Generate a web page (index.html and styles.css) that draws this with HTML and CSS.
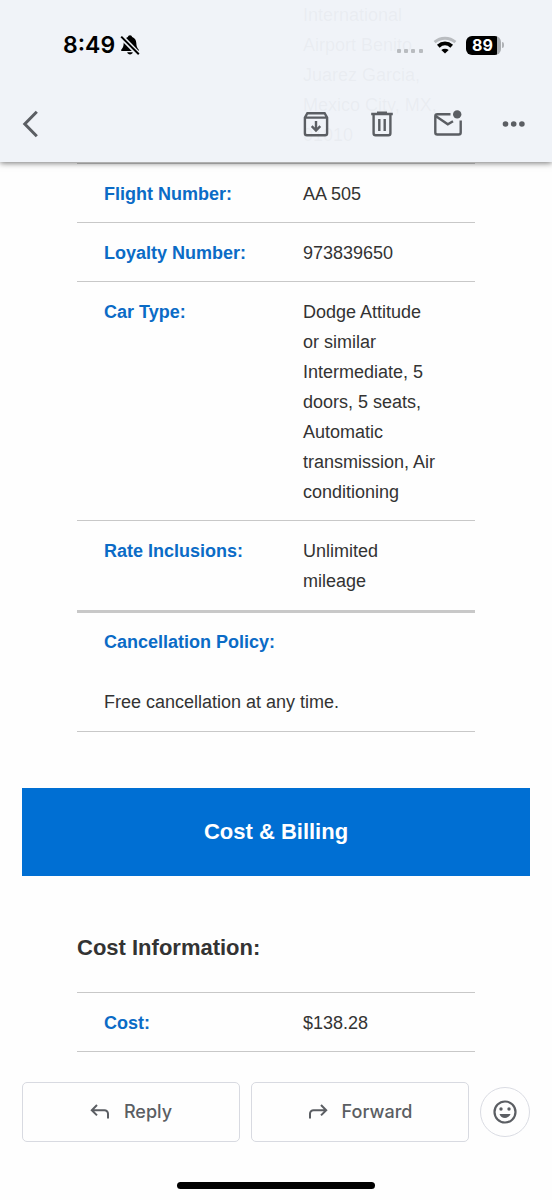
FILE: index.html
```html
<!DOCTYPE html>
<html lang="en">
<head>
<meta charset="utf-8">
<meta name="viewport" content="width=device-width, initial-scale=1">
<title>Cost &amp; Billing</title>
<link rel="stylesheet" href="styles.css">
</head>
<body>
<header class="top">
  <div class="status">
    <span class="time">8:49</span>
    <svg class="bell" width="20" height="22" viewBox="0 0 20 22" aria-hidden="true">
      <path d="M10 1.2c-1.200 0-2 .8-2.200 1.900C5.200 4 3.800 6.200 3.700 9c-.1 3.500-.9 4.900-2.300 6.400-.6.700-.2 1.600.7 1.600h15.800c.9 0 1.300-.9.7-1.600-1.400-1.500-2.200-2.900-2.300-6.400-.1-2.800-1.500-5-4.100-5.900C12 2 11.200 1.200 10 1.200z"/>
      <path d="M7.200 18.300h5.600c-.3 1.300-1.400 2.100-2.800 2.100s-2.500-.8-2.800-2.100z"/>
      <path class="bell-gap" d="M1.200 2.600 18.200 20"/>
      <path class="bell-slash" d="M1.200 2.600 18.800 20.200"/>
    </svg>
    <span class="status-right">
      <svg class="signal" width="28" height="6" viewBox="0 0 28 6" aria-hidden="true"><rect x="1" y="1" width="4" height="4" rx="1"/><rect x="8" y="1" width="4" height="4" rx="1"/><rect x="15" y="1" width="4" height="4" rx="1"/><rect x="23" y="1" width="4" height="4" rx="1"/></svg>
      <svg width="24" height="18" viewBox="0 0 24 18" aria-hidden="true">
        <path class="wifi-off" d="M1.600 6.200C7.600.9 16.400.9 22.400 6.200"/>
        <path class="wifi-on" d="M5.300 10.200c4-3.500 9.400-3.500 13.400 0"/>
        <path d="M12 17.600 8.300 14c2.200-1.800 5.200-1.800 7.400 0z"/>
      </svg>
      <span class="battery"><span class="level">89</span></span>
    </span>
  </div>
  <nav class="toolbar" aria-label="Message actions">
    <button class="tool back" type="button" aria-label="Back"><svg viewBox="0 0 44 44"><path d="M28.800 9.800 16.800 22l12 12.200" stroke-width="3"/></svg></button>
    <button class="tool" type="button" aria-label="Archive"><svg viewBox="0 0 44 44"><path d="M10.900 15.500 13.400 11.200H30.600L33.100 15.500V31.300a2 2 0 0 1-2 2H12.900a2 2 0 0 1-2-2zM10.900 15.600H33.100M22 19V28.500M17.700 24.200 22 28.500l4.300-4.300"/></svg></button>
    <button class="tool" type="button" aria-label="Delete"><svg viewBox="0 0 44 44"><path d="M11.200 12H32.800M17 10.600h10M13.600 12V31.300a2 2 0 0 0 2 2H28.400a2 2 0 0 0 2-2V12M19.300 17V29M24.700 17V29"/></svg></button>
    <button class="tool" type="button" aria-label="Mark as unread"><svg viewBox="0 0 44 44"><path d="M24.500 12.300H11.300a2 2 0 0 0-2 2V30.500a2 2 0 0 0 2 2H32.700a2 2 0 0 0 2-2V18.500M10 14.300 21.800 22.300 27 19.200"/><circle class="solid" cx="31.200" cy="12.400" r="4.200"/></svg></button>
    <button class="tool" type="button" aria-label="More options"><svg viewBox="0 0 44 44"><g class="solid"><circle cx="13.500" cy="22" r="2.800"/><circle cx="21.700" cy="22" r="2.800"/><circle cx="29.900" cy="22" r="2.800"/></g></svg></button>
  </nav>
</header>

<main class="mail">
  <table class="details">
    <tbody>
      <tr class="partial"><th scope="row"></th><td>International Airport Benito Juarez Garcia, Mexico City, MX, 01010</td></tr>
      <tr><th scope="row">Flight Number:</th><td>AA 505</td></tr>
      <tr><th scope="row">Loyalty Number:</th><td>973839650</td></tr>
      <tr><th scope="row">Car Type:</th><td>Dodge Attitude or similar Intermediate, 5 doors, 5 seats, Automatic transmission, Air conditioning</td></tr>
      <tr class="last"><th scope="row">Rate Inclusions:</th><td>Unlimited mileage</td></tr>
    </tbody>
  </table>
  <section class="policy">
    <h3>Cancellation Policy:</h3>
    <p>Free cancellation at any time.</p>
  </section>
  <h1 class="banner">Cost &amp; Billing</h1>
  <h2 class="subhead">Cost Information:</h2>
  <table class="details cost">
    <tbody><tr><th scope="row">Cost:</th><td>$138.28</td></tr></tbody>
  </table>
</main>

<footer class="bottom">
  <div class="actions">
    <button class="action" type="button"><svg width="20" height="16" viewBox="0 0 20 16" aria-hidden="true"><path d="M7 1 1.800 6.200 7 11.400M2 6.200H14.500a3.500 3.500 0 0 1 3.500 3.500V14.500"/></svg>Reply</button>
    <button class="action" type="button"><svg width="20" height="16" viewBox="0 0 20 16" aria-hidden="true"><path d="M13 1 18.200 6.200 13 11.400M18 6.200H5.500A3.500 3.500 0 0 0 2 9.700V14.500"/></svg>Forward</button>
    <button class="react" type="button" aria-label="Add reaction"><svg width="24" height="24" viewBox="0 0 24 24"><circle class="face" cx="12" cy="12" r="10.500"/><circle cx="8" cy="9" r="1.700"/><circle cx="16" cy="9" r="1.700"/><path d="M6.500 14h11c-.8 2.400-2.900 4-5.500 4s-4.700-1.600-5.500-4z"/></svg></button>
  </div>
  <div class="home"></div>
</footer>
</body>
</html>
```
FILE: styles.css
```css
* { box-sizing: border-box; }

body {
  margin: 0;
  min-height: 100vh;
  display: flex;
  flex-direction: column;
  position: relative;
  background: #fefefe;
  color: #333;
  font: 18px/30px "Liberation Sans", Arial, sans-serif;
}

button { padding: 0; background: none; font: inherit; color: inherit; }
h1, h2, h3, p { margin: 0; }

.top {
  position: absolute;
  top: 0;
  left: 0;
  right: 0;
  padding-bottom: 5px;
  background: rgba(239, 243, 248, 0.97);
  box-shadow: 0 1px 6px rgba(0, 0, 0, 0.55);
}

.status {
  display: flex;
  align-items: center;
  height: 90px;
  padding: 0 48px 0 63px;
  color: #000;
}

.time { font: 600 23px/28px Inter, sans-serif; }
.bell { margin-left: 5px; }
.bell-gap { stroke: #eff3f8; stroke-width: 5; }
.bell-slash { stroke: #000; stroke-width: 2; }

.status-right { display: flex; align-items: center; gap: 9px; margin-left: auto; }
.signal { margin-top: 11px; fill: #b9bcc0; }
.wifi-off { fill: none; stroke: #b9bcc0; stroke-width: 3; }
.wifi-on { fill: none; stroke: #000; stroke-width: 4; }

.battery {
  display: flex;
  align-items: center;
  width: 38px;
}
.battery::after {
  content: "";
  width: 2px;
  height: 6px;
  margin-left: 1px;
  border-radius: 0 2px 2px 0;
  background: #b0b3b7;
}
.level {
  width: 35px;
  border-radius: 6px;
  background: linear-gradient(90deg, #000 31px, #aaadb1 31px);
  color: #fff;
  font: 700 16px/19px Inter, sans-serif;
  padding-left: 6px;
}

.toolbar {
  display: flex;
  align-items: center;
  gap: 22px;
  height: 67px;
  padding: 0 16px 0 8px;
  color: #5b5e63;
}

.tool { width: 44px; height: 44px; border: 0; }
.tool svg { display: block; width: 100%; fill: none; stroke: currentColor; stroke-width: 2.4; }
.tool .solid { fill: currentColor; stroke: none; }
.back { margin-right: auto; }

.mail { padding: 0 22px; }

.details, .policy, .subhead { margin: 0 55px; }

.details {
  width: calc(100% - 110px);
  border-collapse: separate;
  border-spacing: 0;
  table-layout: fixed;
}
.details th, .details td {
  padding: 15px 34px 13px 27px;
  border-bottom: 1px solid #c8c8c8;
  text-align: left;
  vertical-align: top;
}
.details th { padding-right: 0; }
.details .partial td { padding-top: 0; }
.details .last th, .details .last td { padding-bottom: 14px; border-bottom-width: 3px; }
.details th, .policy h3 { color: #0b6bc6; font-size: 18px; font-weight: 700; }

.policy { padding: 14px 27px; border-bottom: 1px solid #c8c8c8; }
.policy p { margin-top: 30px; }

.banner {
  margin-top: 56px;
  padding: 29px;
  background: #006fd3;
  color: #fff;
  font-size: 22px;
  text-align: center;
}

.subhead { margin-top: 57px; margin-bottom: 29px; font-size: 22px; }
.cost { border-top: 1px solid #c8c8c8; }

.bottom { margin-top: auto; padding: 0 22px 11px; color: #5b5e63; }
.actions { display: flex; align-items: center; gap: 11px; }
.action {
  flex: 1;
  display: flex;
  align-items: center;
  justify-content: center;
  gap: 14px;
  height: 60px;
  border: 1px solid #d8dae1;
  border-radius: 5px;
  font: 500 18px/28px Inter, sans-serif;
}
.action svg { fill: none; stroke: currentColor; stroke-width: 2; }
.react {
  display: grid;
  place-items: center;
  width: 50px;
  height: 50px;
  border: 1px solid #dadce3;
  border-radius: 50%;
}
.react svg { fill: currentColor; }
.react .face { fill: none; stroke: currentColor; stroke-width: 2.2; }
.home {
  width: 198px;
  height: 7px;
  margin: 40px auto 0;
  border-radius: 4px;
  background: #000;
}
```
